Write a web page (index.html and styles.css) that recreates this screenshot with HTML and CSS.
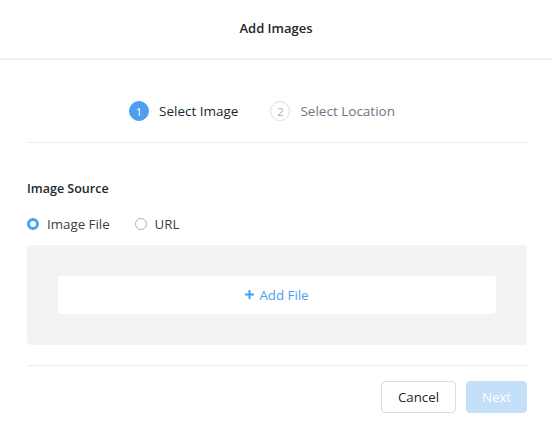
FILE: index.html
```html
<!DOCTYPE html>
<html>
<head>
<meta charset="utf-8">
<link rel="stylesheet" href="styles.css">
</head>
<body>
<div class="modal">
  <header class="modal-header">Add Images</header>
  <div class="modal-body">
    <div class="steps">
      <div class="step active"><span class="step-num">1</span><span class="step-label">Select Image</span></div>
      <div class="step"><span class="step-num">2</span><span class="step-label">Select Location</span></div>
    </div>
    <div class="section">
      <div class="section-title">Image Source</div>
      <div class="radios">
        <label class="radio checked"><span class="radio-dot"></span>Image File</label>
        <label class="radio"><span class="radio-dot"></span>URL</label>
      </div>
      <div class="dropzone">
        <div class="add-file"><svg class="plus" width="9" height="9" viewBox="0 0 9 9"><path d="M4.5 0v9M0 4.5h9" stroke="currentColor" stroke-width="2"/></svg>Add File</div>
      </div>
    </div>
    <div class="footer">
      <button class="btn btn-secondary">Cancel</button>
      <button class="btn btn-primary" disabled>Next</button>
    </div>
  </div>
</div>
</body>
</html>
```
FILE: styles.css
```css
* { box-sizing: border-box; }
html, body { margin: 0; padding: 0; background: #fff; }
body {
  font-family: "Open Sans", "Liberation Sans", sans-serif;
  color: #22272e;
  font-size: 13px;
}
.modal-header {
  height: 60px;
  display: flex;
  align-items: center;
  justify-content: center;
  font-size: 13px;
  font-weight: 600;
  color: #22262c;
  border-bottom: 2px solid #f1f1f3;
  padding-bottom: 2px;
}
.modal-body {
  padding: 0 25px 0 27px;
}
.steps {
  display: flex;
  justify-content: center;
  gap: 32px;
  padding: 41px 0 21px;
  border-bottom: 1px solid #ececef;
  padding-right: 30px;
}
.step {
  display: flex;
  align-items: center;
  gap: 10px;
}
.step-num {
  width: 20px;
  height: 20px;
  border-radius: 50%;
  display: flex;
  align-items: center;
  justify-content: center;
  font-size: 11px;
  border: 1px solid #dadde3;
  color: #a9afb9;
}
.step.active .step-num {
  background: #4c9ff0;
  border-color: #4c9ff0;
  color: #fff;
}
.step-label {
  font-size: 13.5px;
  color: #6c7686;
}
.step.active .step-label { color: #22272e; }
.section {
  padding-top: 38px;
}
.section-title {
  font-size: 12.5px;
  font-weight: 600;
  color: #22272e;
  line-height: 16px;
}
.radios {
  display: flex;
  gap: 25px;
  margin-top: 19px;
  line-height: 16px;
}
.radio {
  display: flex;
  align-items: center;
  gap: 8px;
  font-size: 13.3px;
  color: #3a4049;
}
.radio-dot {
  width: 12px;
  height: 12px;
  border-radius: 50%;
  border: 1px solid #aeb4bd;
  background: #fff;
}
.radio.checked .radio-dot {
  border: 3.5px solid #4c9ff0;
}
.dropzone {
  margin-top: 13px;
  background: #f2f3f5;
  border-radius: 4px;
  padding: 31px;
}
.add-file {
  height: 38px;
  background: #fff;
  border-radius: 4px;
  display: flex;
  align-items: center;
  justify-content: center;
  color: #4c9ff0;
  font-size: 13.3px;
  gap: 5px;
}
.plus {
  margin-top: -2px;
}
.footer {
  margin-top: 20px;
  border-top: 1px solid #ececef;
  padding-top: 15px;
  display: flex;
  justify-content: flex-end;
  gap: 10px;
}
.btn {
  height: 32px;
  border-radius: 4px;
  font-family: inherit;
  font-size: 13.3px;
  padding: 0 10px;
}
.btn-secondary {
  width: 75px;
  background: #fff;
  border: 1px solid #d9dce1;
  color: #22272e;
}
.btn-primary {
  width: 61px;
  background: #c3e0f8;
  border: 1px solid #c3e0f8;
  color: #fff;
}
```
